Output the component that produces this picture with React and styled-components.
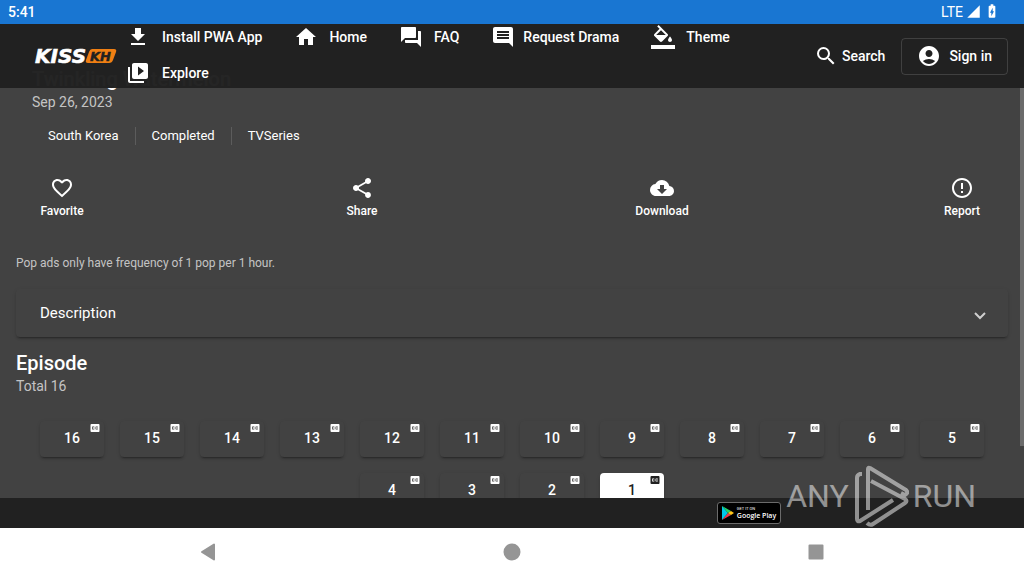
import React, { useState } from "react";
import styled, { createGlobalStyle } from "styled-components";
import {
  MdGetApp,
  MdHome,
  MdQuestionAnswer,
  MdComment,
  MdVideoLibrary,
  MdSearch,
  MdAccountCircle,
  MdFavoriteBorder,
  MdShare,
  MdCloudDownload,
  MdErrorOutline,
  MdClosedCaption,
  MdSignalCellular4Bar,
  MdBatteryChargingFull,
} from "react-icons/md";

const FillIcon = ({ size }) => (
  <svg width={size} height={size} viewBox="0 0 24 24" fill="currentColor" aria-hidden="true">
    <path d="M16.56 8.94L7.62 0 6.21 1.41l2.38 2.38-5.15 5.15c-.59.59-.59 1.54 0 2.12l5.5 5.5c.29.29.68.44 1.06.44s.77-.15 1.06-.44l5.5-5.5c.59-.58.59-1.53 0-2.12zM5.21 10L10 5.21 14.79 10H5.21zM19 11.5s-2 2.17-2 3.5c0 1.1.9 2 2 2s2-.9 2-2c0-1.33-2-3.5-2-3.5z" />
    <path d="M0 20h24v4H0z" />
  </svg>
);

const links = [
  { label: "Install PWA App", icon: MdGetApp, gap: 12 },
  { label: "Home", icon: MdHome, gap: 11 },
  { label: "FAQ", icon: MdQuestionAnswer, gap: 11 },
  { label: "Request Drama", icon: MdComment, gap: 8 },
  { label: "Theme", icon: FillIcon, gap: 11 },
  { label: "Explore", icon: MdVideoLibrary, gap: 12 },
];

const actions = [
  { label: "Favorite", icon: MdFavoriteBorder },
  { label: "Share", icon: MdShare },
  { label: "Download", icon: MdCloudDownload },
  { label: "Report", icon: MdErrorOutline },
];

const tags = ["South Korea", "Completed", "TVSeries"];
const episodes = Array.from({ length: 16 }, (_, i) => 16 - i);

const Logo = () => (
  <svg width="84" height="20" viewBox="0 0 84 20" role="img" aria-label="KissKH">
    <text x="1" y="17" fill="#fff" stroke="#fff" strokeWidth="0.6" fontFamily="DejaVu Sans" fontWeight="700" fontStyle="italic" fontSize="20">
      KISS
    </text>
    <path d="M58 3h22q3 0 2 3l-3 8q-1 3-4 3H54q-3 0-2-3l3-8q1-3 3-3z" fill="#f07f13" />
    <text x="56" y="15" fill="#212121" stroke="#212121" strokeWidth="0.4" fontFamily="DejaVu Sans" fontWeight="700" fontStyle="italic" fontSize="13">
      KH
    </text>
  </svg>
);

const AnyRunMark = () => (
  <svg width="56" height="64" viewBox="0 0 56 64" fill="none" stroke="currentColor" strokeWidth="4" strokeLinejoin="round">
    <path d="M15 46V5q0-2 2-1l36 22q3 3-1 5l-4-2" />
    <path d="M9 10H7q-3 1-3 4v41q0 3 3 2l33-21" />
    <path d="M18 17l34 18q3 2 0 4L20 60q-3 2-6-1" />
  </svg>
);

const App = () => {
  const [current, setCurrent] = useState(1);

  return (
    <>
      <GlobalStyle />
      <Screen>
        <StatusBar>
          <Clock>5:41</Clock>
          <StatusIcons>
            <span>LTE</span>
            <MdSignalCellular4Bar size={15} />
            <MdBatteryChargingFull size={16} />
          </StatusIcons>
        </StatusBar>

        <Header>
          <LogoLink href="#">
            <Logo />
          </LogoLink>
          <Nav>
            {links.map(({ label, icon: Icon, gap }) => (
              <NavLink href="#" key={label} $gap={gap}>
                <Icon size={24} />
                {label}
              </NavLink>
            ))}
          </Nav>
          <SearchButton>
            <MdSearch size={24} />
            Search
          </SearchButton>
          <SignInButton>
            <MdAccountCircle size={24} />
            Sign in
          </SignInButton>
        </Header>

        <Main>
          <DramaInfo>
            <Heading>Twinkling Watermelon</Heading>
            <SubText>Sep 26, 2023</SubText>
          </DramaInfo>

          <TagList>
            {tags.map((tag) => (
              <Tag key={tag}>{tag}</Tag>
            ))}
          </TagList>

          <Actions>
            {actions.map(({ label, icon: Icon }) => (
              <ActionButton key={label}>
                <Icon size={24} />
                {label}
              </ActionButton>
            ))}
          </Actions>

          <Note>Pop ads only have frequency of 1 pop per 1 hour.</Note>

          <Panel>
            Description
            <Chevron viewBox="0 0 12 8" aria-hidden="true">
              <path d="M1 1l5 5 5-5" />
            </Chevron>
          </Panel>

          <Heading>Episode</Heading>
          <SubText>Total 16</SubText>

          <EpisodeList>
            {episodes.map((n) => (
              <EpisodeButton key={n} $active={n === current} onClick={() => setCurrent(n)}>
                {n}
                <Caption size={12} />
              </EpisodeButton>
            ))}
          </EpisodeList>
          <ScrollThumb />
        </Main>

        <Footer>
          <PlayBadge href="#">
            <svg width="12" height="14" viewBox="0 0 12 14" aria-hidden="true">
              <path d="M0 0v14l6-7z" fill="#00c8e8" />
              <path d="M0 0l9 5-3 2z" fill="#25d366" />
              <path d="M0 14l9-5-3-2z" fill="#f03a48" />
              <path d="M9 5l3 2-3 2-3-2z" fill="#ffc61a" />
            </svg>
            <BadgeText>
              <small>GET IT ON</small>
              <strong>Google Play</strong>
            </BadgeText>
          </PlayBadge>
        </Footer>

        <SystemNav>
          <SystemButton aria-label="Back">
            <svg width="16" height="18" viewBox="0 0 16 18">
              <path d="M14 1.5v15L2 9z" />
            </svg>
          </SystemButton>
          <SystemButton aria-label="Home">
            <svg width="18" height="18" viewBox="0 0 18 18">
              <circle cx="9" cy="9" r="7.5" />
            </svg>
          </SystemButton>
          <SystemButton aria-label="Recent apps">
            <svg width="16" height="16" viewBox="0 0 16 16">
              <path d="M1.5 1.5h13v13h-13z" />
            </svg>
          </SystemButton>
        </SystemNav>

        <Watermark>
          <span>ANY</span>
          <AnyRunMark />
          <span>RUN</span>
        </Watermark>
      </Screen>
    </>
  );
};

const GlobalStyle = createGlobalStyle`
* {
  box-sizing: border-box;
}

body {
  margin: 0;
  background: #424242;
  color: #fff;
  font-family: Roboto, "Liberation Sans", sans-serif;
  font-size: 14px;
}

button {
  border: none;
  padding: 0;
  background: none;
  color: inherit;
  font: inherit;
  cursor: pointer;
}

a {
  color: inherit;
  text-decoration: none;
}
`;

const Screen = styled.div`
position: relative;
display: flex;
flex-direction: column;
height: 100vh;
overflow: hidden;
`;

const StatusBar = styled.div`
display: flex;
justify-content: space-between;
align-items: center;
flex: none;
height: 24px;
padding: 0 24px 2px 8px;
background: #1976d2;
z-index: 1;
`;

const Clock = styled.span`
padding-top: 2px;
font-weight: 500;
`;

const StatusIcons = styled.div`
display: flex;
align-items: center;
gap: 3px;

span {
  padding-top: 2px;
}
`;

const Header = styled.header`
display: flex;
align-items: center;
flex: none;
height: 64px;
padding: 0 16px 0 34px;
background: rgba(33, 33, 33, 0.98);
font-weight: 500;
z-index: 2;
`;

const LogoLink = styled.a`
display: flex;
flex: none;
`;

const Nav = styled.nav`
display: flex;
flex: 1;
flex-wrap: wrap;
margin-left: -8px;
padding-bottom: 2px;
`;

const NavLink = styled.a`
display: flex;
align-items: center;
gap: ${(props) => props.$gap}px;
height: 36px;
padding: 0 16px;
white-space: nowrap;
`;

const SearchButton = styled.button`
display: flex;
align-items: center;
gap: 4px;
flex: none;
height: 36px;
padding: 0 16px;
`;

const SignInButton = styled.button`
display: flex;
align-items: center;
gap: 8px;
flex: none;
height: 37px;
padding: 0 15px;
border: 1px solid rgba(255, 255, 255, 0.14);
border-radius: 4px;
`;

const Main = styled.main`
position: relative;
flex: 1;
min-height: 0;
margin-top: -21px;
padding: 0 16px;
overflow: hidden;
`;

const DramaInfo = styled.div`
padding: 0 16px;
`;

const Heading = styled.h2`
margin: 0;
font-size: 20px;
font-weight: 500;
line-height: 24px;
`;

const SubText = styled.p`
margin: 0;
color: rgba(255, 255, 255, 0.7);
line-height: 22px;
`;

const TagList = styled.ul`
display: flex;
margin: 14px 16px 0;
padding: 0;
list-style: none;
font-size: 13px;
line-height: 18px;
`;

const Tag = styled.li`
padding: 0 16px;

& + & {
  border-left: 1px solid rgba(255, 255, 255, 0.14);
}
`;

const Actions = styled.div`
display: flex;
justify-content: space-between;
margin-top: 31px;
`;

const ActionButton = styled.button`
display: flex;
flex-direction: column;
align-items: center;
gap: 3px;
width: 92px;
font-size: 12px;
font-weight: 500;
line-height: 16px;
`;

const Note = styled.p`
margin: 36px 0 18px;
color: rgba(255, 255, 255, 0.7);
font-size: 12px;
line-height: 16px;
`;

const Panel = styled.button`
display: flex;
justify-content: space-between;
align-items: center;
width: 100%;
height: 48px;
margin-bottom: 14px;
padding: 0 22px 0 24px;
border-radius: 4px;
font-size: 15px;
box-shadow: 0 3px 1px -2px rgba(0, 0, 0, 0.2), 0 2px 2px 0 rgba(0, 0, 0, 0.14), 0 1px 5px 0 rgba(0, 0, 0, 0.06);
`;

const Chevron = styled.svg`
width: 12px;
height: 8px;
margin-top: 5px;
fill: none;
stroke: rgba(255, 255, 255, 0.75);
stroke-width: 2;
`;

const EpisodeList = styled.div`
display: flex;
flex-wrap: wrap;
justify-content: center;
gap: 16px;
margin-top: 24px;
`;

const EpisodeButton = styled.button`
position: relative;
width: 64px;
height: 36px;
padding-bottom: 2px;
border-radius: 4px;
background: ${(props) => (props.$active ? "#fff" : "#424242")};
color: ${(props) => (props.$active ? "#212121" : "#fff")};
font-weight: 500;
box-shadow: 0 3px 1px -2px rgba(0, 0, 0, 0.2), 0 2px 2px 0 rgba(0, 0, 0, 0.14), 0 1px 5px 0 rgba(0, 0, 0, 0.06);
`;

const Caption = styled(MdClosedCaption)`
position: absolute;
top: 1px;
right: 3px;
`;

const ScrollThumb = styled.div`
position: absolute;
top: 0;
right: 0;
width: 4px;
height: 379px;
background: #6b6b6b;
`;

const Footer = styled.footer`
display: flex;
align-items: center;
flex: none;
height: 30px;
padding-left: 70%;
background: #212121;
z-index: 1;
`;

const PlayBadge = styled.a`
display: flex;
align-items: center;
gap: 3px;
width: 64px;
height: 22px;
padding-left: 4px;
border: 1px solid #6b6b6b;
border-radius: 3px;
background: #000;
`;

const BadgeText = styled.span`
display: flex;
flex-direction: column;
white-space: nowrap;

small {
  font-size: 4px;
  line-height: 5px;
}

strong {
  font-family: "Open Sans", sans-serif;
  font-size: 7px;
  font-weight: 600;
  line-height: 9px;
}
`;

const SystemNav = styled.nav`
display: grid;
grid-template-columns: repeat(3, 1fr);
flex: none;
height: 48px;
padding: 0 56px;
background: #fff;
z-index: 1;
`;

const SystemButton = styled.button`
display: flex;
justify-content: center;
align-items: center;

svg {
  fill: #959595;
  stroke: #959595;
  stroke-width: 2;
  stroke-linejoin: round;
}
`;

// floats over the page and the footer
const Watermark = styled.div`
position: absolute;
right: 48px;
bottom: 48px;
display: flex;
align-items: center;
gap: 4px;
color: #fff;
font-size: 32px;
font-weight: 400;
line-height: 64px;
opacity: 0.5;
pointer-events: none;
z-index: 4;
`;

export default App;
